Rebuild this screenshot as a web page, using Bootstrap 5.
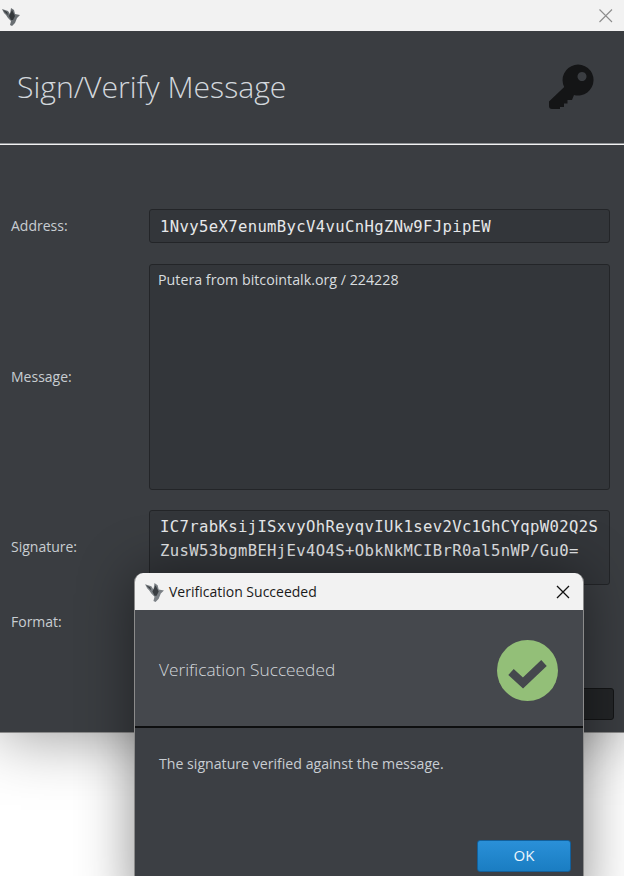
<!DOCTYPE html>
<html lang="en">
<head>
<meta charset="utf-8">
<title>Sign/Verify Message</title>
<link rel="stylesheet" href="https://cdn.jsdelivr.net/npm/bootstrap@5.3.0/dist/css/bootstrap.min.css">
<style>
html,body{height:876px;overflow:hidden;background:#fff}
body{position:relative;font-family:"Open Sans","Noto Sans",sans-serif;font-size:14px;color:#c9ced3}
.app-window{height:733px;background:#3a3d41;box-shadow:0 4px 60px rgba(0,0,0,.4);border-bottom:1px solid #8a8a8a}
.title-strip{height:31px;background:#f2f2f2}
.bird-main{margin-left:1px}
.head-zone{height:112px;padding:1px 27px 0 17px}
.head-title{font-size:30.2px;font-weight:300;color:#d2d7dc;margin:0}
.head-rule{height:2px;background:linear-gradient(#8f9295 50%,#f2f2f2 50%)}
.form-zone{padding:64px 14px 0 11px}
.lab-cell{width:138px;flex:none;color:#c8cdd2;padding-bottom:2px}
.fld{background:#33363a;border:1px solid #232528;border-radius:3px;color:#e6e8ea;flex:1 1 auto;min-width:0}
.fld-mono{font-family:"DejaVu Sans Mono","Liberation Mono",monospace;font-size:15.6px;letter-spacing:.35px;word-break:break-all}
.fld-addr{height:34px;line-height:34px;padding:0 10px;white-space:nowrap}
.fld-msg{height:226px;padding:4px 8px;color:#d8dcdf;font-size:14.25px}
.fld-sig{height:75px;padding:4px 10px 0;line-height:24px}
.form-line{margin-bottom:21px}
.form-line-msg{margin-bottom:20px}
.form-line-sig{margin-bottom:0}
.fmt-line{height:74px}
.foot-line{margin-top:29px;height:32px;margin-right:-4px}
.close-back{width:140px;height:32px;background:#232527;border:1px solid #141516;border-radius:3px;color:#d8a060;font-size:14px;padding:0 29px 0 0;line-height:30px;text-align:right}
.dlg{position:absolute;left:134px;top:573px;width:450px;height:340px;background:#3c3f44;border-radius:9px 9px 0 0;box-shadow:0 0 55px rgba(0,0,0,.45);border-left:1px solid #8b8b8b;border-right:1px solid #8b8b8b;overflow:hidden}
.dlg-title{height:37px;background:#f2f2f2;color:#1a1a1a;font-size:14px;padding:0 13px 0 9px}
.dlg-head{height:118px;background:#45484d;padding:4px 25px 0 24px;border-bottom:2px solid #0e0f10}
.dlg-headline{font-size:17.3px;color:#d2d6da;font-weight:300}
.dlg-body{padding:25px 24px 0;color:#c8cdd2;height:112px;font-size:14.15px}
.dlg-foot{padding-right:12px}
.ok-btn{width:94px;height:32px;padding:0 0 2px;background:linear-gradient(#2a90d8,#1a7dc2);border:1px solid #12609c;color:#eef6fc;font-size:15px;border-radius:3px;line-height:26px}
</style>
</head>
<body>
<div class="app-window">
  <div class="title-strip d-flex align-items-center justify-content-between">
    <svg class="bird-main" width="20" height="20" viewBox="0 0 20 20"><path d="M1 3 7 5 9 8 10 2 13 4 14 8 19 9 16 12 14 17 11 20 9 19 10 15 7 12 5 9 3 7z" fill="#6a6f73"/><path d="M9 8 11 4 13 8 14 10 12 14 10 14 8 10zM2 4 6 6 7 9z" fill="#33373a"/></svg>
    <svg class="me-2" width="20" height="20" viewBox="0 0 20 20"><path d="M3.500 3.500 16 16M16 3.500 3.500 16" stroke="#8c8c8c" stroke-width="1.1" fill="none"/></svg>
  </div>
  <div class="head-zone d-flex align-items-center justify-content-between">
    <h1 class="head-title">Sign/Verify Message</h1>
    <svg width="50" height="50" viewBox="0 0 50 50"><path fill-rule="evenodd" fill="#141516" d="M17.200 24A15.500 15.500 0 1 1 27 32L25 37H20.500V40.500H17V44H13V46H5Q2 46 2 43V38.500ZM35 9a4.500 4.500 0 1 0 .01 0Z"/></svg>
  </div>
  <div class="head-rule"></div>
  <div class="form-zone">
    <div class="d-flex align-items-center form-line">
      <div class="lab-cell">Address:</div>
      <div class="fld fld-mono fld-addr">1Nvy5eX7enumBycV4vuCnHgZNw9FJpipEW</div>
    </div>
    <div class="d-flex align-items-center form-line-msg">
      <div class="lab-cell">Message:</div>
      <div class="fld fld-msg">Putera from bitcointalk.org / 224228</div>
    </div>
    <div class="d-flex align-items-center form-line-sig">
      <div class="lab-cell">Signature:</div>
      <div class="fld fld-mono fld-sig">IC7rabKsijISxvyOhReyqvIUk1sev2Vc1GhCYqpW02Q2S ZusW53bgmBEHjEv4O4S+ObkNkMCIBrR0al5nWP/Gu0=</div>
    </div>
    <div class="d-flex align-items-center fmt-line">
      <div class="lab-cell">Format:</div>
    </div>
    <div class="d-flex justify-content-end foot-line">
      <div class="close-back">Verify Message</div>
    </div>
  </div>
</div>

<div class="dlg">
  <div class="dlg-title d-flex align-items-center">
    <svg class="me-1" width="21" height="21" viewBox="0 0 20 20"><path d="M1 3 7 5 9 8 10 2 13 4 14 8 19 9 16 12 14 17 11 20 9 19 10 15 7 12 5 9 3 7z" fill="#7b8085"/><path d="M9 8 11 4 13 8 14 10 12 14 10 14 8 10zM2 4 6 6 7 9z" fill="#3a3e42"/></svg>
    <span class="flex-grow-1">Verification Succeeded</span>
    <svg width="14" height="14" viewBox="0 0 14 14"><path d="M1 1 13 13M13 1 1 13" stroke="#111" stroke-width="1.3" fill="none"/></svg>
  </div>
  <div class="dlg-head d-flex align-items-center justify-content-between">
    <span class="dlg-headline">Verification Succeeded</span>
    <svg width="61" height="61" viewBox="0 0 61 61"><circle cx="30.500" cy="30.500" r="30.500" fill="#93bf78"/><path d="M14 32 26 43 47 23" fill="none" stroke="#45484d" stroke-width="8"/></svg>
  </div>
  <div class="dlg-body">The signature verified against the message.</div>
  <div class="dlg-foot d-flex justify-content-end">
    <button type="button" class="btn ok-btn">OK</button>
  </div>
</div>
<script src="https://cdn.jsdelivr.net/npm/bootstrap@5.3.0/dist/js/bootstrap.bundle.min.js"></script>
</body>
</html>
